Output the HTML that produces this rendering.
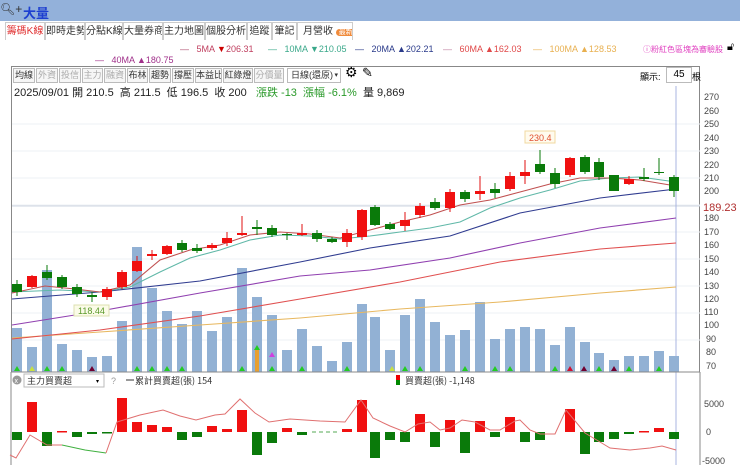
<!DOCTYPE html><html><head><meta charset="utf-8"><style>
body{margin:0;width:740px;height:465px;overflow:hidden;background:#fff;font-family:"Liberation Sans","Noto Sans CJK TC",sans-serif;position:relative}
.a{position:absolute;white-space:nowrap}
.tab{position:absolute;top:22px;height:18px;border:1px solid #ccc;border-bottom:none;font-size:10px;line-height:18px;text-align:center;color:#333;box-sizing:border-box;background:#fff;white-space:nowrap;overflow:hidden}
.b{position:absolute;top:68px;height:15px;border:1px solid #bbb;font-size:9px;line-height:13px;text-align:center;color:#333;box-sizing:border-box;background:#f6f6f6;white-space:nowrap;overflow:hidden}
.g{color:#aaa}
.lg{position:absolute;font-size:9px;top:44px;white-space:nowrap}
</style></head><body>
<div class="a" style="left:0;top:0;width:740px;height:21px;background:#93b1da"></div>
<div class="a" style="left:0;top:2px;font-size:12px;color:#333">🔍︎+</div>
<div class="a" style="left:23px;top:3px;font-size:13px;font-weight:bold;color:#1d3fd0">大量</div>
<div class="tab" style="left:5px;width:40px;color:#e03030">籌碼K線</div>
<div class="tab" style="left:45px;width:40px">即時走勢</div>
<div class="tab" style="left:85px;width:38px">分點K線</div>
<div class="tab" style="left:123px;width:40px">大量券商</div>
<div class="tab" style="left:163px;width:42px">主力地圖</div>
<div class="tab" style="left:205px;width:42px">個股分析</div>
<div class="tab" style="left:247px;width:25px">追蹤</div>
<div class="tab" style="left:272px;width:25px">筆記</div>
<div class="tab" style="left:297px;width:56px;text-align:left;padding-left:5px">月營收 <span style="background:#f08a3a;color:#fff;border-radius:6px;font-size:7px;padding:0 3px">最新</span></div>
<div class="lg" style="left:180px;color:#c04060"><span style="color:#b05070">—</span> &nbsp; 5MA <span style="color:#c00">▼</span>206.31</div>
<div class="lg" style="left:268px;color:#3aa88a">— &nbsp; 10MA ▼210.05</div>
<div class="lg" style="left:355px;color:#2a3a8a">— &nbsp; 20MA ▲202.21</div>
<div class="lg" style="left:443px;color:#e04848"><span style="color:#c080a0">—</span> &nbsp; 60MA ▲162.03</div>
<div class="lg" style="left:533px;color:#e8b050">— &nbsp; 100MA ▲128.53</div>
<div class="lg" style="left:643px;color:#e040c0;font-size:8px">ⓘ粉紅色區塊為審驗股</div>
<div class="a" style="left:727px;top:41px;font-size:11px">🔓︎</div>
<div class="lg" style="left:95px;top:55px;color:#a0308a">— &nbsp; 40MA ▲180.75</div>
<div class="a" style="left:11px;top:66px;width:689px;height:306px;border:1px solid #888;border-bottom:none;box-sizing:border-box"></div>
<div class="b" style="left:13px;width:22px">均線</div>
<div class="b g" style="left:36px;width:22px">外資</div>
<div class="b g" style="left:59px;width:22px">投信</div>
<div class="b g" style="left:82px;width:21px">主力</div>
<div class="b g" style="left:104px;width:22px">融資</div>
<div class="b" style="left:127px;width:21px">布林</div>
<div class="b" style="left:149px;width:22px">趨勢</div>
<div class="b" style="left:172px;width:22px">撐壓</div>
<div class="b" style="left:195px;width:27px">本益比</div>
<div class="b" style="left:223px;width:30px">紅綠燈</div>
<div class="b g" style="left:254px;width:30px">分價量</div>
<div class="b" style="left:287px;width:54px;background:#fff;text-align:left;padding-left:3px">日線(還原) <span style="font-size:7px;float:right;margin-right:2px">▾</span></div>
<div class="a" style="left:345px;top:64px;font-size:14px">⚙</div>
<div class="a" style="left:362px;top:65px;font-size:13px">✎</div>
<div class="a" style="left:640px;top:70px;font-size:9px">顯示:</div>
<div class="a" style="left:666px;top:67px;width:24px;height:14px;border:1px solid #bbb;font-size:10px;text-align:center;line-height:14px">45</div>
<div class="a" style="left:692px;top:70px;font-size:9px">根</div>
<div class="a" style="left:14px;top:84px;font-size:11px;color:#222">2025/09/01 開 210.5 &nbsp;高 211.5 &nbsp;低 196.5 &nbsp;收 200 &nbsp; <span style="color:#2a9a2a">漲跌 -13 &nbsp;漲幅 -6.1%</span> &nbsp;量 9,869</div>
<svg class="a" style="left:0;top:0" width="740" height="465" font-family="Liberation Sans" font-size="9">
<g stroke="#eef0f4" stroke-width="1">
<line x1="12" y1="124" x2="700" y2="124"/><line x1="12" y1="151" x2="700" y2="151"/><line x1="12" y1="178" x2="700" y2="178"/><line x1="12" y1="205" x2="700" y2="205"/><line x1="12" y1="232" x2="700" y2="232"/><line x1="12" y1="259" x2="700" y2="259"/><line x1="12" y1="286" x2="700" y2="286"/><line x1="12" y1="313" x2="700" y2="313"/><line x1="12" y1="340" x2="700" y2="340"/></g>
<line x1="12" y1="206" x2="700" y2="206" stroke="#ccd4e0"/>
<line x1="676" y1="86" x2="676" y2="465" stroke="#a8b4e0"/>
<g fill="#92b1d4">
<rect x="12" y="328" width="10" height="44"/><rect x="27" y="347" width="10" height="25"/><rect x="42" y="270" width="10" height="102"/><rect x="57" y="344" width="10" height="28"/><rect x="72" y="350" width="10" height="22"/><rect x="87" y="357" width="10" height="15"/><rect x="102" y="356" width="10" height="16"/><rect x="117" y="321" width="10" height="51"/><rect x="132" y="247" width="10" height="125"/><rect x="147" y="288" width="10" height="84"/><rect x="162" y="311" width="10" height="61"/><rect x="177" y="324" width="10" height="48"/><rect x="192" y="311" width="10" height="61"/><rect x="207" y="331" width="10" height="41"/><rect x="222" y="317" width="10" height="55"/><rect x="237" y="268" width="10" height="104"/><rect x="252" y="297" width="10" height="75"/><rect x="267" y="315" width="10" height="57"/><rect x="282" y="350" width="10" height="22"/><rect x="297" y="329" width="10" height="43"/><rect x="312" y="346" width="10" height="26"/><rect x="327" y="361" width="10" height="11"/><rect x="342" y="342" width="10" height="30"/><rect x="357" y="304" width="10" height="68"/><rect x="370" y="317" width="10" height="55"/><rect x="385" y="350" width="10" height="22"/><rect x="400" y="315" width="10" height="57"/><rect x="415" y="299" width="10" height="73"/><rect x="430" y="322" width="10" height="50"/><rect x="445" y="335" width="10" height="37"/><rect x="460" y="330" width="10" height="42"/><rect x="475" y="302" width="10" height="70"/><rect x="490" y="339" width="10" height="33"/><rect x="505" y="329" width="10" height="43"/><rect x="520" y="327" width="10" height="45"/><rect x="535" y="329" width="10" height="43"/><rect x="550" y="345" width="10" height="27"/><rect x="565" y="327" width="10" height="45"/><rect x="580" y="342" width="10" height="30"/><rect x="594" y="353" width="10" height="19"/><rect x="609" y="360" width="10" height="12"/><rect x="624" y="356" width="10" height="16"/><rect x="639" y="356" width="10" height="16"/><rect x="654" y="351" width="10" height="21"/><rect x="669" y="356" width="10" height="16"/></g>
<g fill="#22cc22">
<path d="M14 371l3-5 3 5z M44 371l3-5 3 5z M59 371l3-5 3 5z M134 371l3-5 3 5z M149 371l3-5 3 5z M164 371l3-5 3 5z M179 371l3-5 3 5z M239 371l3-5 3 5z M269 371l3-5 3 5z M299 371l3-5 3 5z M344 371l3-5 3 5z M402 371l3-5 3 5z M417 371l3-5 3 5z M462 371l3-5 3 5z M492 371l3-5 3 5z M507 371l3-5 3 5z M552 371l3-5 3 5z M596 371l3-5 3 5z M626 371l3-5 3 5z M656 371l3-5 3 5z M254 350l3-5 3 5z"/></g>
<path d="M29 371l3-5 3 5z M389 371l3-5 3 5z" fill="#c8e040"/>
<path d="M89 371l3-5 3 5z M581 371l3-5 3 5z M611 371l3-5 3 5z" fill="#700030"/>
<path d="M269 357l3-5 3 5z" fill="#d040e0"/>
<path d="M567 371l3-5 3 5z" fill="#d01030"/>
<rect x="255" y="350" width="4" height="22" fill="#e8a030"/>
<g fill="none" stroke-width="1.1">
<polyline stroke="#e8b860" points="12,338 100,332 200,325 300,318 400,309 500,302 600,293 676,287"/>
<polyline stroke="#e05050" points="12,339 100,330 200,316 300,299 400,282 500,262 600,249 676,243"/>
<polyline stroke="#9040b0" points="12,325 100,311 200,293 300,276 370,270 450,258 520,243 600,228 676,218"/>
<polyline stroke="#303c90" points="12,299 100,292 200,281 300,262 370,248 450,236 520,213 600,198 676,189"/>
<polyline stroke="#60b8a8" points="12,292 60,290 100,292 130,287 160,272 190,258 220,250 250,240 280,235 310,236 340,239 370,236 400,232 430,228 460,222 490,208 520,198 550,190 580,181 610,178 640,177 676,182"/>
<polyline stroke="#c05050" points="12,293 45,286 75,289 100,292 130,285 160,260 190,250 220,245 250,235 280,232 310,234 340,238 370,230 400,222 430,215 460,205 490,200 520,192 550,184 580,178 610,178 640,180 676,186"/>
</g>
<g stroke-width="1">
<g stroke="#0a7a0a"><line x1="17" y1="280" x2="17" y2="296"/><line x1="47" y1="265" x2="47" y2="280"/><line x1="62" y1="275" x2="62" y2="289"/><line x1="77" y1="284" x2="77" y2="297"/><line x1="92" y1="292" x2="92" y2="302"/><line x1="182" y1="240" x2="182" y2="252"/><line x1="197" y1="244" x2="197" y2="253"/><line x1="257" y1="220" x2="257" y2="235"/><line x1="272" y1="225" x2="272" y2="237"/><line x1="287" y1="233" x2="287" y2="240"/><line x1="317" y1="230" x2="317" y2="242"/><line x1="332" y1="237" x2="332" y2="243"/><line x1="375" y1="205" x2="375" y2="226"/><line x1="390" y1="222" x2="390" y2="230"/><line x1="435" y1="198" x2="435" y2="210"/><line x1="465" y1="190" x2="465" y2="202"/><line x1="495" y1="183" x2="495" y2="198"/><line x1="540" y1="150" x2="540" y2="174"/><line x1="555" y1="168" x2="555" y2="188"/><line x1="585" y1="155" x2="585" y2="174"/><line x1="599" y1="158" x2="599" y2="180"/><line x1="614" y1="175" x2="614" y2="191"/><line x1="644" y1="168" x2="644" y2="181"/><line x1="659" y1="158" x2="659" y2="175"/><line x1="674" y1="175" x2="674" y2="197"/></g>
<g stroke="#e01010"><line x1="32" y1="275" x2="32" y2="288"/><line x1="107" y1="287" x2="107" y2="300"/><line x1="122" y1="270" x2="122" y2="289"/><line x1="137" y1="256" x2="137" y2="272"/><line x1="152" y1="250" x2="152" y2="260"/><line x1="167" y1="245" x2="167" y2="255"/><line x1="212" y1="243" x2="212" y2="250"/><line x1="227" y1="232" x2="227" y2="246"/><line x1="242" y1="216" x2="242" y2="236"/><line x1="302" y1="224" x2="302" y2="236"/><line x1="347" y1="229" x2="347" y2="247"/><line x1="362" y1="209" x2="362" y2="240"/><line x1="405" y1="212" x2="405" y2="231"/><line x1="420" y1="203" x2="420" y2="218"/><line x1="450" y1="189" x2="450" y2="212"/><line x1="480" y1="176" x2="480" y2="200"/><line x1="510" y1="172" x2="510" y2="191"/><line x1="525" y1="160" x2="525" y2="184"/><line x1="570" y1="157" x2="570" y2="177"/><line x1="629" y1="176" x2="629" y2="185"/></g></g>
<g fill="#0a7a0a"><rect x="12" y="284" width="10" height="8"/><rect x="42" y="272" width="10" height="6"/><rect x="57" y="277" width="10" height="10"/><rect x="72" y="287" width="10" height="7"/><rect x="87" y="295" width="10" height="2"/><rect x="177" y="243" width="10" height="7"/><rect x="192" y="248" width="10" height="3"/><rect x="252" y="227" width="10" height="2"/><rect x="267" y="228" width="10" height="7"/><rect x="282" y="234" width="10" height="1"/><rect x="312" y="233" width="10" height="6"/><rect x="327" y="239" width="10" height="3"/><rect x="370" y="207" width="10" height="18"/><rect x="385" y="224" width="10" height="5"/><rect x="430" y="202" width="10" height="6"/><rect x="460" y="192" width="10" height="7"/><rect x="490" y="189" width="10" height="4"/><rect x="535" y="164" width="10" height="8"/><rect x="550" y="173" width="10" height="11"/><rect x="580" y="157" width="10" height="15"/><rect x="594" y="162" width="10" height="15"/><rect x="609" y="175" width="10" height="16"/><rect x="639" y="177" width="10" height="2"/><rect x="654" y="172" width="10" height="1"/><rect x="669" y="177" width="10" height="14"/></g>
<g fill="#f01010"><rect x="27" y="276" width="10" height="11"/><rect x="102" y="289" width="10" height="8"/><rect x="117" y="272" width="10" height="15"/><rect x="132" y="261" width="10" height="10"/><rect x="147" y="254" width="10" height="2"/><rect x="162" y="246" width="10" height="8"/><rect x="207" y="245" width="10" height="3"/><rect x="222" y="238" width="10" height="5"/><rect x="237" y="233" width="10" height="2"/><rect x="297" y="233" width="10" height="2"/><rect x="342" y="233" width="10" height="9"/><rect x="357" y="210" width="10" height="27"/><rect x="400" y="220" width="10" height="6"/><rect x="415" y="206" width="10" height="9"/><rect x="445" y="192" width="10" height="16"/><rect x="475" y="191" width="10" height="3"/><rect x="505" y="176" width="10" height="13"/><rect x="520" y="172" width="10" height="4"/><rect x="565" y="158" width="10" height="17"/><rect x="624" y="179" width="10" height="5"/></g>
<rect x="74" y="305" width="35" height="11" fill="#fbfbe8" stroke="#dde0b0"/><text x="78" y="314" fill="#5a9a2a">118.44</text>
<rect x="525" y="131" width="30" height="12" fill="#fffbee" stroke="#f0d8a0"/><text x="529" y="141" fill="#e05030">230.4</text>
<g fill="#444"><text x="704" y="100">270</text><text x="704" y="114">260</text><text x="704" y="127">250</text><text x="704" y="141">240</text><text x="704" y="154">230</text><text x="704" y="168">220</text><text x="704" y="181">210</text><text x="704" y="194">200</text><text x="704" y="221">180</text><text x="704" y="235">170</text><text x="704" y="248">160</text><text x="704" y="262">150</text><text x="704" y="275">140</text><text x="704" y="289">130</text><text x="704" y="302">120</text><text x="704" y="315">110</text><text x="704" y="328">100</text><text x="706" y="342">90</text><text x="706" y="355">80</text><text x="706" y="369">70</text>
<text x="704" y="407">5000</text><text x="706" y="435">0</text><text x="702" y="464">-5000</text></g>
<text x="703" y="211" fill="#b03030" font-size="11">189.23</text>
<line x1="11" y1="372" x2="700" y2="372" stroke="#888"/>
<line x1="11" y1="372" x2="11" y2="465" stroke="#888"/><line x1="700" y1="372" x2="700" y2="465" stroke="#888"/>
<circle cx="17" cy="380" r="4.5" fill="#999"/><text x="14.5" y="383" fill="#fff" font-size="7">x</text>
<rect x="24" y="374" width="80" height="13" fill="#fff" stroke="#bbb"/><text x="27" y="384" fill="#333" font-family="Noto Sans CJK TC">主力買賣超</text><text x="96" y="383" font-size="6">▾</text>
<text x="111" y="384" fill="#999">?</text>
<line x1="126" y1="380" x2="134" y2="380" stroke="#333"/><text x="135" y="384" fill="#333" font-family="Noto Sans CJK TC">累計買賣超(張) 154</text>
<rect x="396" y="375" width="4" height="5" fill="#e00"/><rect x="396" y="380" width="4" height="5" fill="#080"/><text x="405" y="384" fill="#333" font-family="Noto Sans CJK TC">買賣超(張) -1,148</text>
<g fill="#f01010"><rect x="27" y="402" width="10" height="30"/><rect x="57" y="431" width="10" height="1.5"/><rect x="117" y="398" width="10" height="34"/><rect x="132" y="422" width="10" height="10"/><rect x="147" y="425" width="10" height="7"/><rect x="162" y="427" width="10" height="5"/><rect x="207" y="426" width="10" height="6"/><rect x="222" y="429" width="10" height="3"/><rect x="237" y="410" width="10" height="22"/><rect x="282" y="428" width="10" height="4"/><rect x="342" y="429" width="10" height="3"/><rect x="357" y="400" width="10" height="32"/><rect x="415" y="414" width="10" height="18"/><rect x="445" y="420" width="10" height="12"/><rect x="475" y="421" width="10" height="11"/><rect x="505" y="417" width="10" height="15"/><rect x="565" y="409" width="10" height="23"/><rect x="654" y="428" width="10" height="4"/><rect x="639" y="431" width="10" height="1.5"/></g>
<g fill="#0a7a0a"><rect x="12" y="432" width="10" height="8"/><rect x="42" y="432" width="10" height="14"/><rect x="72" y="432" width="10" height="5"/><rect x="87" y="432" width="10" height="2"/><rect x="102" y="432" width="10" height="1.5"/><rect x="177" y="432" width="10" height="8"/><rect x="192" y="432" width="10" height="5"/><rect x="252" y="432" width="10" height="23"/><rect x="267" y="432" width="10" height="11"/><rect x="297" y="432" width="10" height="3"/><rect x="370" y="432" width="10" height="26"/><rect x="385" y="432" width="10" height="8"/><rect x="400" y="432" width="10" height="10"/><rect x="430" y="432" width="10" height="15"/><rect x="460" y="432" width="10" height="21"/><rect x="490" y="432" width="10" height="5"/><rect x="520" y="432" width="10" height="10"/><rect x="535" y="432" width="10" height="8"/><rect x="580" y="432" width="10" height="22"/><rect x="594" y="432" width="10" height="10"/><rect x="609" y="432" width="10" height="7"/><rect x="624" y="432" width="10" height="2"/><rect x="669" y="432" width="10" height="7"/></g>
<line x1="312" y1="432" x2="340" y2="432" stroke="#5a5" stroke-dasharray="4,3"/>
<polyline fill="none" stroke="#e07070" stroke-width="1" points="10,455 16,458 30,435 47,445 62,445"/>
<polyline fill="none" stroke="#40b040" stroke-width="1" points="62,445 85,450 106,453"/>
<polyline fill="none" stroke="#e07070" stroke-width="1" points="106,453 117,422 140,415 163,410 180,416 196,420 215,415 225,414 240,399 255,413 269,422 290,419 320,421 345,422 361,400 373,418 390,426 405,432 418,424 430,422 440,430 450,428 462,420 475,422 490,430 500,430 515,421 520,420 530,430 540,434 555,434 566,410 585,433 600,442 610,448 630,450 650,448 662,446 676,450"/>
</svg>
</body></html>
